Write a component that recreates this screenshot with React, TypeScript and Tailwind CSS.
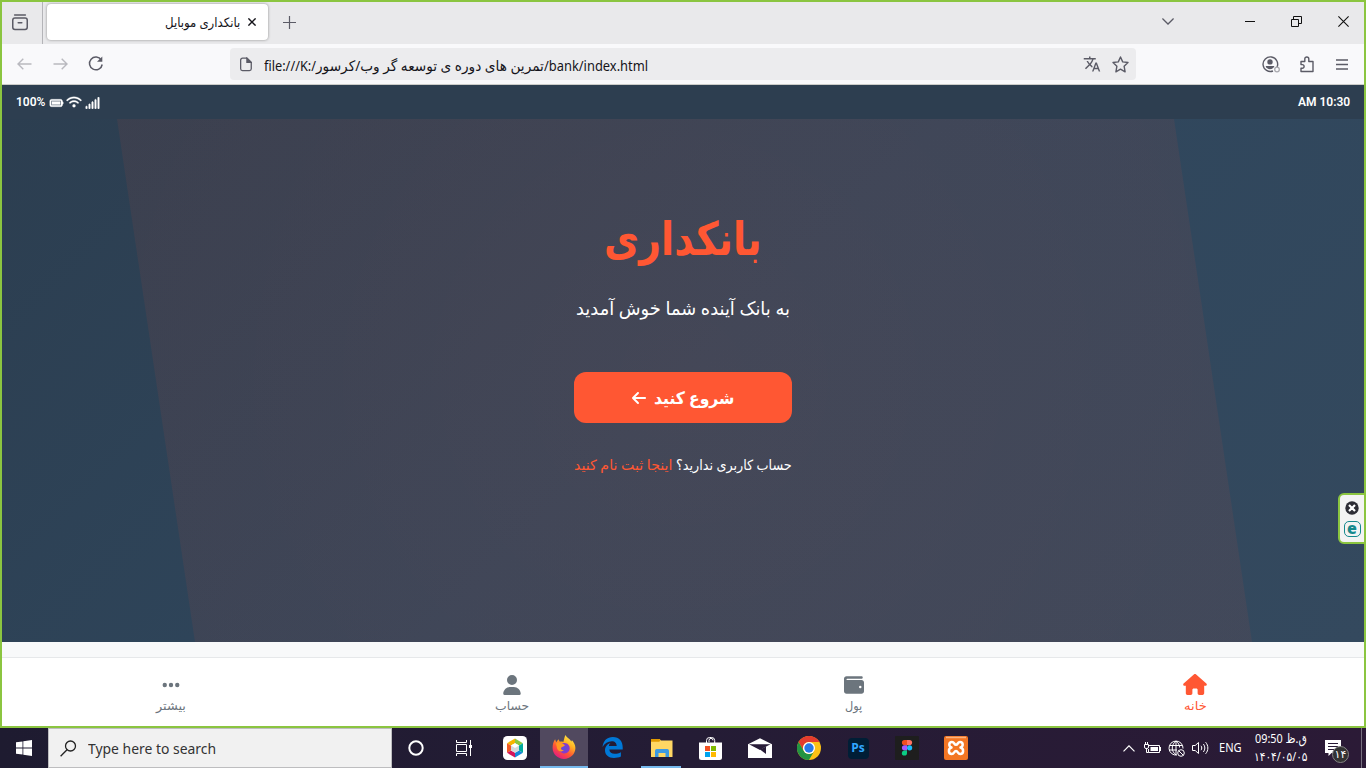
import { useLayoutEffect, useRef, useState, type ReactNode } from 'react';
import { FaBatteryFull, FaWifi, FaSignal, FaArrowLeft, FaHouse, FaWallet, FaUser, FaEllipsis } from 'react-icons/fa6';
import { MdTranslate } from 'react-icons/md';

type FitProps = { width: number; className?: string; rtl?: boolean; children: ReactNode };

/* One line of text, condensed or widened to a fixed width. */
function Fit({ width, className = '', rtl = false, children }: FitProps) {
  const ref = useRef<HTMLSpanElement>(null);
  const [scale, setScale] = useState(1);
  useLayoutEffect(() => {
    if (ref.current) setScale(width / ref.current.offsetWidth);
  }, [width]);
  return (
    <span dir="ltr" className={`block shrink-0 whitespace-nowrap ${className}`} style={{ width }}>
      <span ref={ref} dir={rtl ? 'rtl' : 'ltr'} className="inline-block origin-left" style={{ transform: `scaleX(${scale})` }}>
        {children}
      </span>
    </span>
  );
}

function TabStrip() {
  return (
    <div className="flex h-11 shrink-0 bg-[#e9e9eb] pt-0.5 text-[#5b5b66]">
      <div className="flex w-[43px] items-center border-r border-[#b4b4b8] pl-3">
        <svg width="16" height="17" viewBox="0 0 16 17" className="-mt-0.5" fill="none" stroke="currentColor" strokeWidth="1.5" strokeLinecap="round">
          <path d="M2.6 1h10.8" />
          <rect x=".75" y="4" width="14.5" height="11.5" rx="2.2" />
          <path d="M6.2 8.8h3.6" />
        </svg>
      </div>
      <div className="ml-[4px] mt-[2px] flex h-9 w-[221px] items-center justify-end rounded bg-white pr-3 shadow-[0_0_3px_rgba(0,0,0,0.4)]">
        <Fit width={75} rtl className="font-['Noto_Sans','DejaVu_Sans',sans-serif] text-[13px] leading-5 text-[#15141a]">بانکداری موبایل</Fit>
        <svg width="8" height="8" viewBox="0 0 8 8" className="ml-2" stroke="#15141a" strokeWidth="1.4"><path d="M.4.4l7.2 7.2M7.6.4L.4 7.6" /></svg>
      </div>
      <svg width="13" height="13" viewBox="0 0 13 13" className="ml-[15px] mt-[14px]" stroke="currentColor" strokeWidth="1.2"><path d="M6.500 0v13M0 6.500h13" /></svg>
      <div className="flex-1" />
      <svg width="12" height="7" viewBox="0 0 12 7" className="mr-[71px] mt-[16px]" fill="none" stroke="currentColor" strokeWidth="1.3"><path d="M.4.5L6 6l5.600-5.500" /></svg>
      <svg width="10" height="10" viewBox="0 0 10 10" className="mr-9 mt-[15px]" stroke="#111"><path d="M0 4.500h10" /></svg>
      <svg width="11" height="11" viewBox="0 0 11 11" className="mr-9 mt-[14px]" fill="none" stroke="#111"><path d="M.5 3.500h7v7h-7zM2.500 3.500v-3h8v7h-3" /></svg>
      <svg width="11" height="11" viewBox="0 0 11 11" className="mr-[17px] mt-[14px]" stroke="#111" strokeWidth="1.1"><path d="M.4.4l10.200 10.200M10.600.4L.4 10.600" /></svg>
    </div>
  );
}

function Toolbar() {
  return (
    <div className="flex h-[41px] shrink-0 items-center border-b border-[#ccccc9] bg-[#f9f9fb] text-[#5b5b66]">
      <svg width="15" height="12" viewBox="0 0 15 12" className="ml-[17px]" fill="none" stroke="#b9b9bf" strokeWidth="1.400"><path d="M14.500 6H1M6.300.7L1 6l5.300 5.300" /></svg>
      <svg width="15" height="12" viewBox="0 0 15 12" className="ml-[21px]" fill="none" stroke="#b9b9bf" strokeWidth="1.400"><path d="M.5 6H14M8.700.7L14 6l-5.300 5.300" /></svg>
      <svg width="16" height="16" viewBox="0 0 16 16" className="ml-5" fill="none" stroke="currentColor" strokeWidth="1.500"><path d="M13.300 4A6.400 6.400 0 1 0 14.200 8.500" /><path d="M14.300.5v5.300H9z" fill="currentColor" stroke="none" /></svg>
      <div className="ml-[126px] flex h-8 w-[906px] items-center rounded bg-[#ececee]">
        <svg width="12" height="15" viewBox="0 0 13 15" className="ml-2.5" fill="none" stroke="currentColor" strokeWidth="1.400"><path d="M7.500.7H2.700a2 2 0 0 0-2 2v9.500a2 2 0 0 0 2 2h7.500a2 2 0 0 0 2-2V5.300z" /><path d="M7.500.7v4.600h4.700z" fill="currentColor" /></svg>
        <div className="ml-3 flex pt-px font-['Noto_Sans','DejaVu_Sans',sans-serif] text-[14.500px] leading-6 text-[#15141a]">
          <Fit width={52}>file:///K:/</Fit>
          <Fit width={228} rtl>تمرین های دوره ی توسعه گر وب/کرسور</Fit>
          <Fit width={104}>/bank/index.html</Fit>
        </div>
        <div className="flex-1" />
        <MdTranslate className="mr-[11px] size-[18px]" />
        <svg width="17" height="17" viewBox="0 0 17 17" className="mr-[7px]" fill="none" stroke="currentColor" strokeWidth="1.400" strokeLinejoin="round"><path d="M8.500 1l2.200 4.900 5.300.6-3.900 3.700 1 5.600-4.600-2.700-4.600 2.700 1-5.600L1 6.500l5.300-.6z" /></svg>
      </div>
      <div className="flex-1" />
      <svg width="18" height="17" viewBox="0 0 18 17" className="mr-[20px]" fill="none" stroke="currentColor" strokeWidth="1.400">
        <path d="M15 11.200A7.300 7.300 0 1 0 11 15" /><circle cx="8" cy="5.900" r="2.700" fill="currentColor" stroke="none" /><path d="M3.600 10h8.800c-.4 2-2.400 3.200-4.400 3.200S4 12 3.600 10z" fill="currentColor" stroke="none" /><circle cx="15" cy="13.500" r="2.300" stroke="#aaaab0" strokeWidth="1.300" />
      </svg>
      <svg width="14" height="17" viewBox="0 0 14 17" className="mr-[22px]" fill="none" stroke="currentColor" strokeWidth="1.400" strokeLinejoin="round"><path d="M1 5.500h3.800V3a2 2 0 0 1 4 0v2.500H13v10H1v-3.300h1.300a1.800 1.800 0 0 0 0-3.600H1z" /></svg>
      <svg width="12" height="11" viewBox="0 0 12 11" className="mr-[18px]" stroke="currentColor" strokeWidth="1.300"><path d="M0 1h12M0 5.500h12M0 10h12" /></svg>
    </div>
  );
}

function StatusBar() {
  return (
    <div className="flex h-[34px] shrink-0 items-center justify-between bg-[#2d3e50] pb-px pl-4 pr-4 font-['Roboto',sans-serif] text-xs font-semibold text-white">
      <div className="flex items-center">
        <Fit width={29}>100%</Fit>
        <FaBatteryFull className="ml-1 mt-[2px] h-3 w-[15px]" stroke="currentColor" strokeWidth="12" />
        <FaWifi className="ml-[2px] mt-px h-3 w-[16px]" stroke="currentColor" strokeWidth="12" />
        <FaSignal className="ml-[3px] mt-[2px] h-3 w-[15px]" stroke="currentColor" strokeWidth="18" />
      </div>
      <Fit width={52}>AM 10:30</Fit>
    </div>
  );
}

function Hero() {
  return (
    <main className="relative flex h-[523px] shrink-0 flex-col items-center overflow-hidden bg-linear-135 from-[#2c3e50] via-[#2f465c] to-[#34495e] font-['Noto_Sans','DejaVu_Sans',sans-serif] text-white">
      <div className="absolute inset-0 bg-[radial-gradient(circle,rgba(255,80,45,0.1),rgba(255,75,45,0.08)_60%,rgba(255,75,45,0.065))] [clip-path:polygon(117px_0,1174px_0,1252px_100%,195px_100%)]" />
      <div className="relative flex flex-col items-center">
        <h1 className="mt-[82px] h-[72px] font-bold text-[#ff5733]"><Fit width={158} rtl className="text-[46px] leading-[72px]">بانکداری</Fit></h1>
        <p className="mt-[19px]"><Fit width={214} rtl className="text-[18.500px] leading-8">به بانک آینده شما خوش آمدید</Fit></p>
        <button className="mt-12 flex h-[51px] w-[218px] items-center justify-center gap-[7px] rounded-xl bg-[#ff5733] pr-0.5 font-bold">
          <FaArrowLeft className="mt-px size-4" />
          <Fit width={80} rtl className="text-[17px] leading-6">شروع کنید</Fit>
        </button>
        <p className="mt-[30px] flex gap-1 text-[14px] leading-6">
          <Fit width={98} rtl className="text-[#ff5733]">اینجا ثبت نام کنید</Fit>
          <Fit width={116} rtl>حساب کاربری ندارید؟</Fit>
        </p>
      </div>
    </main>
  );
}

const navItems = [
  { label: 'بیشتر', icon: FaEllipsis, width: 30, color: 'text-[#6c757d]', size: 'size-5' },
  { label: 'حساب', icon: FaUser, width: 34, color: 'text-[#6c757d]', size: 'size-5' },
  { label: 'پول', icon: FaWallet, width: 17, color: 'text-[#6c757d]', size: 'size-5' },
  { label: 'خانه', icon: FaHouse, width: 23, color: 'text-[#ff5733]', size: 'h-[21px] w-6' },
];

function BottomNav() {
  return (
    <nav className="grid h-[71px] shrink-0 grid-cols-4 border-t border-[#e6e8ea] bg-white pt-4">
      {navItems.map(({ label, icon: Icon, width, color, size }) => (
        <div key={label} className={`flex flex-col items-center gap-[2px] ${color}`}>
          <div className="flex h-[21px] items-center"><Icon className={size} /></div>
          <Fit width={width} rtl className="font-['Noto_Sans','DejaVu_Sans',sans-serif] text-[12px] leading-[18px]">{label}</Fit>
        </div>
      ))}
    </nav>
  );
}

function HexagonIcon() {
  return (
    <svg width="24" height="24" viewBox="0 0 24 24">
      <rect width="24" height="24" rx="4.500" fill="#fff" />
      <path d="M12 2.500l8 4.700-4 2.400-4-2.300z" fill="#8cc63f" /><path d="M12 2.500L4 7.200l4 2.400 4-2.300z" fill="#f7b500" />
      <path d="M4 7.200v9.600l4-2.400V9.600z" fill="#f15a24" /><path d="M4 16.800l8 4.700v-4.800l-4-2.300z" fill="#d4145a" />
      <path d="M12 21.500l8-4.700-4-2.400-4 2.300z" fill="#1686d9" /><path d="M20 16.800V7.200l-4 2.400v4.800z" fill="#00a99d" />
      <path d="M12 7.300l4 2.300v4.800l-4 2.300-4-2.300V9.600z" fill="#d5d9dc" /><path d="M12 7.300l4 2.300-4 2.400-4-2.400z" fill="#fff" />
    </svg>
  );
}

function FirefoxIcon() {
  return (
    <svg width="24" height="24" viewBox="0 0 24 24">
      <defs>
        <linearGradient id="fox" x1=".85" y1="0" x2=".25" y2="1"><stop offset="0" stopColor="#fff44f" /><stop offset=".35" stopColor="#ffb423" /><stop offset=".65" stopColor="#ff5733" /><stop offset="1" stopColor="#e31587" /></linearGradient>
        <radialGradient id="globe"><stop offset="0" stopColor="#5c4ddd" /><stop offset="1" stopColor="#8e38c8" /></radialGradient>
      </defs>
      <path d="M13.500 0c.8 2.400 4.900 4 5.800 6.600.5-.4.600-1 .5-1.600 2 2.300 3.600 4.900 3.600 8.100C23.400 19.400 18.200 24 12 24S.6 19.300.6 13.100C.6 9.600 1.300 7 3.100 4.300l1.100 2.900 2.200-3 1.400 2.600c1.500-.4 2.400-.2 3.500.2.900-2 .9-4.800 2.200-7z" fill="url(#fox)" />
      <path d="M8 10c2.500-3 8-2.600 9.400 1.500 1.300 4-1.700 7-5 7-3 0-5.600-2.400-5.300-5.500z" fill="url(#globe)" />
      <path d="M4 8.500c3-1.700 5.500-1.200 9 1.700-1.500 1.800-3.300 1.500-4 2.900-.4 1.400 1.300 2.600 3 2-2 2.600-6 1.200-6.900-1.700z" fill="#ff9a22" />
    </svg>
  );
}

function EdgeIcon() {
  return (
    <svg width="21" height="21" viewBox="0 0 21 21">
      <path d="M.5 10C1.300 3.500 5.200 0 10.800 0 17.500 0 20.700 4.600 20.700 10.300v2.300H7.300c.2 3 2.500 4.200 5.300 4.200 2.400 0 4.500-.6 6.300-1.600v4.400c-2 1-4.400 1.400-7 1.400-5.400 0-8.900-3-8.900-7.700 0-3.700 2.300-6.400 5.400-7.400-1 .9-1.400 2-1.500 3.200h7.800C14.600 6.400 13.200 4.300 9.600 4.300 6 4.300 2.700 6.500.5 10z" fill="#0078d7" />
    </svg>
  );
}

function FolderIcon() {
  return (
    <svg width="22" height="19" viewBox="0 0 22 19">
      <path d="M0 0h8.500l1.500 1.500h11.500V18H0z" fill="#ffd764" /><path d="M0 0h8.500l1 1.200-1.200 1.600H0z" fill="#e19a00" />
      <path d="M4 18v-6.200A1.800 1.800 0 0 1 5.800 10h10.400a1.800 1.800 0 0 1 1.800 1.800V18h-3.500v-4h-7v4z" fill="#3d9ae2" />
    </svg>
  );
}

function StoreIcon() {
  return (
    <svg width="23" height="23" viewBox="0 0 23 23">
      <path d="M7.500 6V3.500a3 3 0 0 1 3-3h2.200a3 3 0 0 1 3 3V6M10 5V3.400a2 2 0 0 1 4 0" fill="none" stroke="#fff" />
      <path d="M0 5.500h23v15a2.500 2.500 0 0 1-2.500 2.500h-18A2.500 2.500 0 0 1 0 20.500z" fill="#fff" />
      <path d="M6 9h5v5H6z" fill="#f25022" /><path d="M12 9h5v5h-5z" fill="#7fba00" /><path d="M6 15h5v5H6z" fill="#00a4ef" /><path d="M12 15h5v5h-5z" fill="#ffb900" />
    </svg>
  );
}

function MailIcon() {
  return (
    <svg width="24" height="20" viewBox="0 0 24 20"><path d="M0 6.200L12 .2l12 6V20H0z" fill="#fff" /><path d="M1 6.300h21.500l-5.200 2.700-5.300 3z" fill="#281c38" /><path d="M12 11.500l6 4.500V8.500z" fill="#281c38" /></svg>
  );
}

function ChromeIcon() {
  return (
    <svg width="24" height="24" viewBox="0 0 24 24">
      <circle cx="12" cy="12" r="12" fill="#fbc116" />
      <path d="M1.600 6A12 12 0 0 1 22.400 6H12a6 6 0 0 0-5.200 9z" fill="#e33b2e" />
      <path d="M1.600 6A12 12 0 0 0 12 24l5.200-9a6 6 0 0 1-10.400 0z" fill="#229342" />
      <circle cx="12" cy="12" r="6" fill="#fff" /><circle cx="12" cy="12" r="4.700" fill="#2878e8" />
    </svg>
  );
}

function FigmaIcon() {
  return (
    <svg width="24" height="24" viewBox="0 0 24 24">
      <rect width="24" height="24" rx="1" fill="#1e1e1e" />
      <path d="M12 4H9.500a2.600 2.600 0 0 0 0 5.200H12z" fill="#f24e1e" /><path d="M12 4h2.500a2.600 2.600 0 0 1 0 5.200H12z" fill="#ff7262" />
      <path d="M12 9.200H9.500a2.600 2.600 0 0 0 0 5.200H12z" fill="#a259ff" /><circle cx="14.600" cy="11.800" r="2.600" fill="#1abcfe" /><path d="M12 14.400H9.500a2.600 2.600 0 1 0 2.500 2.600z" fill="#0acf83" />
    </svg>
  );
}

function XamppIcon() {
  return (
    <svg width="24" height="24" viewBox="0 0 24 24">
      <rect width="24" height="24" rx="2" fill="#f37623" /><path d="M2 1.500h20" stroke="#fbb37f" strokeWidth="1.500" />
      <path d="M7.500 11.500C4.500 10.500 4.500 6 8 6c2.500 0 2 2.800 4 2.800S13.500 6 16 6c3.500 0 3.500 4.500.5 5.500 3.500 1 3.500 6.500-.3 6.500-2.500 0-2.200-3-4.200-3s-1.700 3-4.200 3c-3.800 0-3.800-5.500-.3-6.500z" fill="none" stroke="#fff" strokeWidth="2.500" strokeLinejoin="round" />
    </svg>
  );
}

const apps = [
  { name: 'cortana', cell: '', icon: <svg width="16" height="16" viewBox="0 0 16 16" fill="none" stroke="#fff" strokeWidth="2"><circle cx="8" cy="8" r="6.700" /></svg> },
  {
    name: 'tasks', cell: '',
    icon: <svg width="16" height="16" viewBox="0 0 16 16" fill="none" stroke="#fff"><path d="M.5 0v2.500h10V0M.5 4.500h10v7H.5zM.5 16v-2.500h10V16M14.500 0v16" /><path d="M13 5h3v3h-3z" fill="#fff" stroke="none" /></svg>,
  },
  { name: 'hexagon', cell: 'ml-[3px]', icon: <HexagonIcon /> },
  { name: 'firefox', cell: 'bg-[#51495f] border-b-2 border-[#76b9ed] ml-[1px]', icon: <FirefoxIcon /> },
  { name: 'edge', cell: 'ml-[1px] pb-px pr-0.5', icon: <EdgeIcon /> },
  { name: 'folder', cell: 'relative pl-px after:absolute after:inset-x-1 after:bottom-0 after:h-0.5 after:bg-[#76b9ed]', icon: <FolderIcon /> },
  { name: 'store', cell: 'ml-px', icon: <StoreIcon /> },
  { name: 'mail', cell: 'ml-0.5', icon: <MailIcon /> },
  { name: 'chrome', cell: 'ml-px', icon: <ChromeIcon /> },
  { name: 'photoshop', cell: 'ml-px', icon: <div className="flex size-[21px] items-center justify-center rounded bg-[#001e36] font-['Open_Sans',sans-serif] text-[12px] font-bold text-[#31a8ff]">Ps</div> },
  { name: 'figma', cell: 'ml-px', icon: <FigmaIcon /> },
  { name: 'xampp', cell: 'ml-px', icon: <XamppIcon /> },
];

function Taskbar() {
  return (
    <footer className="flex h-10 shrink-0 bg-linear-to-r from-[#1e1b30] via-[#241c35] to-[#2b1a36] font-['Noto_Sans','DejaVu_Sans',sans-serif] text-white">
      <div className="flex w-12 items-center justify-center">
        <svg width="16" height="16" viewBox="0 0 16 16" fill="#fff"><path d="M0 2.300L6.500 1.400v6.200H0zM7.300 1.200L16 0v7.600H7.300zM0 8.400h6.500v6.200L0 13.700zM7.300 8.400H16V16l-8.700-1.200z" /></svg>
      </div>
      <div className="flex w-[344px] items-center border border-[#bdbdbf] bg-[#f1f1f1] pl-[11px]">
        <svg width="17" height="17" viewBox="0 0 17 17" fill="none" stroke="#222" strokeWidth="1.300"><circle cx="10.500" cy="6" r="5" /><path d="M7 9.700L.6 16.200" /></svg>
        <Fit width={128} className="ml-[11px] text-[15px] leading-6 text-[#333]">Type here to search</Fit>
      </div>
      <div className="flex">
        {apps.map((a) => (
          <div key={a.name} className={`flex h-10 w-12 shrink-0 items-center justify-center ${a.cell}`}>{a.icon}</div>
        ))}
      </div>
      <div className="flex-1" />
      <div className="flex items-center">
        <svg width="12" height="7" viewBox="0 0 12 7" fill="none" stroke="#fff" strokeWidth="1.200"><path d="M.5 6.300L6 .8l5.500 5.500" /></svg>
        <svg width="17" height="13" viewBox="0 0 17 13" className="ml-[9px]" fill="none" stroke="#fff"><path d="M5 3.500h10.500v7h-11V7M1.500 0v2.500M3.500 0v2.500M.5 2.500h4V5A1.500 1.500 0 0 1 3 6.500H2A1.500 1.500 0 0 1 .5 5zM2.500 6.500v4h2M16.500 5v4" /><path d="M6.500 5H14v4H6.500z" fill="#fff" stroke="none" /></svg>
        <svg width="17" height="17" viewBox="0 0 17 17" className="ml-[7px]" fill="none" stroke="#fff"><path d="M9 15A7 7 0 1 1 15 8.500M8 1C3 5 3 11 8 15M8 1c2.500 2 3.500 4 3.600 6.500M1.500 5.500h13M1 10h8M8 1v14" /><circle cx="13" cy="13" r="3.300" /><path d="M10.800 10.800l4.400 4.400" /></svg>
        <svg width="17" height="14" viewBox="0 0 17 14" className="ml-[7px]" fill="none" stroke="#fff"><path d="M.5 4.500h2.700l3.300-3v11l-3.300-3H.5zM9 4.800c1 1.300 1 3.100 0 4.400M11.300 3c2 2.400 2 5.600 0 8M13.600 1.200c3 3.500 3 8.100 0 11.600" /></svg>
        <Fit width={23} className="ml-[10px] text-xs leading-5">ENG</Fit>
        <div className="ml-[11px] flex w-[56px] flex-col items-center">
          <Fit width={52} className="text-[12.500px] leading-[18px]">09:50 ق.ظ</Fit>
          <Fit width={54} className="text-[12px] leading-[18px]">۱۴۰۴/۰۵/۰۵</Fit>
        </div>
        <div className="relative ml-4 mr-[2px] h-[26px] w-[26px]">
          <svg width="16" height="16" viewBox="0 0 16 16" className="mt-[5px]"><path d="M0 0h16v13H6.500L3.500 16v-3H0z" fill="#fff" /><path d="M3 3.500h10M3 6.500h10M3 9.500h7" stroke="#291a36" /></svg>
          <span className="absolute left-[7px] top-[11px] flex size-[17px] items-center justify-center rounded-full border border-[#858585] bg-[#333] font-['DejaVu_Sans',sans-serif] text-[11px] leading-none">۱۴</span>
        </div>
        <div className="ml-[8px] mr-1 h-10 w-px bg-[#77707f]" />
      </div>
    </footer>
  );
}

function SideWidget() {
  return (
    <aside className="absolute right-0 top-[493px] flex h-[51px] w-7 flex-col items-center gap-[6px] rounded-l-md border-2 border-[#8bc540] bg-[#f3f3f3] pt-[6px]">
      <svg width="14" height="14" viewBox="0 0 14 14" className="shrink-0"><circle cx="7" cy="7" r="6.700" fill="#2d2d35" /><path d="M4 4l6 6M10 4l-6 6" stroke="#fff" strokeWidth="2.200" /></svg>
      <div className="flex h-4 w-[17px] shrink-0 items-center justify-center rounded-[5px] border-[1.500px] border-[#16898d] font-['Open_Sans',sans-serif] text-[16px] leading-none font-extrabold text-[#16898d]"><span className="-mt-[3px]">e</span></div>
    </aside>
  );
}

export default function App() {
  return (
    <div className="relative flex h-[768px] w-[1366px] flex-col overflow-hidden bg-[#f8f9fa]">
      <TabStrip />
      <Toolbar />
      <StatusBar />
      <Hero />
      <div className="h-[15px] shrink-0" />
      <BottomNav />
      <Taskbar />
      <div className="pointer-events-none absolute inset-x-0 top-0 h-[728px] border-2 border-[#8bc540]" />
      <SideWidget />
    </div>
  );
}
